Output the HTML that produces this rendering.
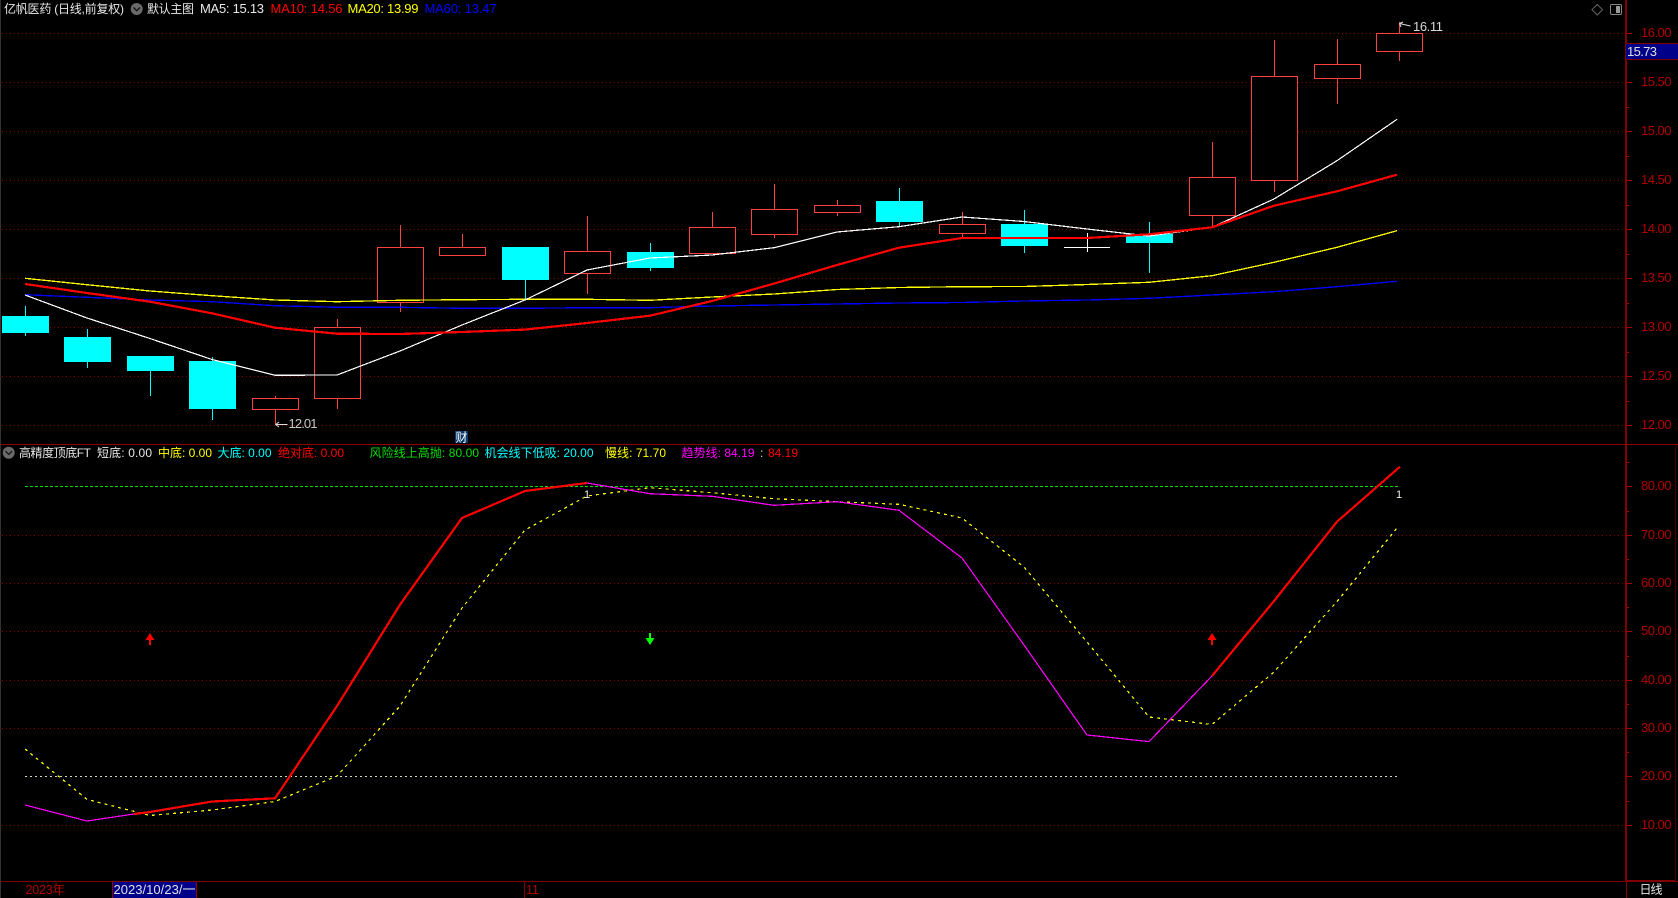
<!DOCTYPE html>
<html><head><meta charset="utf-8"><title>亿帆医药</title>
<style>
html,body{margin:0;padding:0;background:#000;width:1678px;height:898px;overflow:hidden}
svg{display:block;position:absolute;left:0;top:0}
text{font-family:"Liberation Sans","Noto Sans CJK SC",sans-serif;font-size:12.5px;white-space:pre}
.ax{fill:#b00000;font-size:13px}
.g{stroke:#800000;stroke-width:1;stroke-dasharray:1 3}
.r{fill:#000;stroke:#ff4040;stroke-width:1}
.w{stroke:#ff4040;stroke-width:1}
.c{fill:#0ff}
.cw{stroke:#0ff;stroke-width:1}
</style></head><body>
<svg width="1678" height="898" viewBox="0 0 1678 898" xmlns="http://www.w3.org/2000/svg">
<rect width="1678" height="898" fill="#000"/>
<rect x="0" y="0" width="1" height="898" fill="#333"/>
<g shape-rendering="crispEdges">
<!-- grid -->
<g fill="none">
<path class="g" d="M2 33.5H1625M2 82.5H1625M2 131.5H1625M2 180.5H1625M2 229.5H1625M2 278.5H1625M2 327.5H1625M2 376.5H1625M2 425.5H1625"/>
<path class="g" d="M2 535.5H1625M2 583.5H1625M2 631.5H1625M2 680.5H1625M2 728.5H1625M2 825.5H1625"/>
</g>
<!-- frame -->
<rect x="1625" y="0" width="2" height="881" fill="#800000"/>
<rect x="1626" y="881" width="1" height="17" fill="#800000"/>
<rect x="1" y="444" width="1677" height="1" fill="#900000"/>
<rect x="1" y="881" width="1677" height="1" fill="#800000"/>
<rect x="1626" y="880" width="50" height="2" fill="#800000"/>
<rect x="1675" y="445" width="1" height="436" fill="#400000"/>
<path stroke="#a00000" stroke-width="1" d="M1626 33.5H1632M1626 82.5H1632M1626 131.5H1632M1626 180.5H1632M1626 229.5H1632M1626 278.5H1632M1626 327.5H1632M1626 376.5H1632M1626 425.5H1632M1626 486.5H1632M1626 535.5H1632M1626 583.5H1632M1626 631.5H1632M1626 680.5H1632M1626 728.5H1632M1626 776.5H1632M1626 825.5H1632M1626 58.5H1629M1626 107.5H1629M1626 156.5H1629M1626 205.5H1629M1626 254.5H1629M1626 303.5H1629M1626 352.5H1629M1626 401.5H1629M1626 462.5H1629M1626 511.5H1629M1626 559.5H1629M1626 607.5H1629M1626 656.5H1629M1626 704.5H1629M1626 752.5H1629M1626 801.5H1629"/>

<!-- candles -->
<path class="cw" d="M25.5 306V336M87.5 329V368M150.5 371V396M212.5 357V420M525.5 280V300M650.5 243V271M899.5 188V226M1024.5 210V253M1149.5 222V273" fill="none"/>
<rect class="c" x="2" y="316" width="47" height="17"/>
<rect class="c" x="64" y="337" width="47" height="25"/>
<rect class="c" x="127" y="356" width="47" height="15"/>
<rect class="c" x="189" y="361" width="47" height="48"/>
<rect class="c" x="502" y="247" width="47" height="33"/>
<rect class="c" x="627" y="252" width="47" height="16"/>
<rect class="c" x="876" y="201" width="47" height="21"/>
<rect class="c" x="1001" y="224" width="47" height="22"/>
<rect class="c" x="1126" y="234" width="47" height="9"/>

<path class="w" fill="none" d="M275.5 396V425M337.5 319V409M400.5 225V312M462.5 234V248M587.5 216V294M712.5 212V228M774.5 184V238M837.5 200V216M962.5 212V238M1212.5 142V227M1274.5 40V192M1337.5 39V104M1399.5 22V61"/>
<rect class="r" x="252.5" y="398.5" width="46" height="11"/>
<rect class="r" x="314.5" y="327.5" width="46" height="71"/>
<rect class="r" x="377.5" y="247.5" width="46" height="55"/>
<rect class="r" x="439.5" y="247.5" width="46" height="8"/>
<rect class="r" x="564.5" y="251.5" width="46" height="22"/>
<rect class="r" x="689.5" y="227.5" width="46" height="26"/>
<rect class="r" x="751.5" y="209.5" width="46" height="25"/>
<rect class="r" x="814.5" y="205.5" width="46" height="7"/>
<rect class="r" x="939.5" y="224.5" width="46" height="9"/>
<rect class="r" x="1189.5" y="177.5" width="46" height="38"/>
<rect class="r" x="1251.5" y="76.5" width="46" height="104"/>
<rect class="r" x="1314.5" y="64.5" width="46" height="14"/>
<rect class="r" x="1376.5" y="33.5" width="46" height="18"/>
<path stroke="#fff" stroke-width="1" fill="none" d="M1064 247.5H1110M1087.5 233V252"/>

<!-- MA lines -->
<g fill="none" stroke-linejoin="round">
<polyline stroke="#0000ff" stroke-width="1.3" points="25,294.7 87,297.3 150,300 212,301.7 275,305.7 337,307.3 400,307.3 462,308.3 525,308.3 587,307.7 650,307.7 712,306 774,305 837,304 899,303 962,302.5 1024,301 1087,300 1149,298.3 1212,295 1274,291.7 1337,286.7 1397,281.3"/>
<polyline stroke="#ffff00" stroke-width="1.3" points="25,278.3 87,284.7 150,291 212,295.7 275,300 337,301.7 400,300.3 462,299.7 525,299.3 587,299.3 650,300.3 712,297 774,294 837,289.5 899,287.5 962,286.7 1024,286.5 1087,284.5 1149,282.3 1212,275.7 1274,262.3 1337,247.3 1397,230.7"/>
<polyline stroke="#ffffff" stroke-width="1.2" points="25,295 87,318 150,338.5 212,359.5 275,375.3 337,375 400,351 462,325 525,300 587,270 650,258 712,255 774,247.7 837,232 899,226.7 962,217 1024,221.5 1087,229 1149,236 1212,227.3 1274,199 1337,160.7 1397,119.3"/>
<polyline stroke="#ff0000" stroke-width="2.2" points="25,284 87,293 150,301.7 212,313.3 275,327.7 337,333.7 400,334 462,332 525,329.6 587,323 650,315.7 712,301 774,283.6 837,265 899,247.7 962,238 1024,238 1087,238 1149,234.3 1212,227.3 1274,205.7 1337,191.3 1397,174.7"/>
</g>

<!-- lower horizontal levels -->
<path fill="none" stroke="#00e000" stroke-width="1" stroke-dasharray="3 2" d="M25 486.5H1399"/>
<path fill="none" stroke="#d8d8b0" stroke-width="1" stroke-dasharray="2 3" d="M25 776.5H1399"/>

<!-- slow dashed -->
<polyline fill="none" stroke="#ffff00" stroke-width="1.2" stroke-dasharray="3 4" points="25,749 87,799.4 150,815.5 212,810 275,801.5 337,776 400,706 462,608 525,530 587,496 650,487.7 712,492.7 774,498.7 837,501.7 899,504.3 962,518 1024,567 1087,642 1149,717 1212,724.5 1274,672 1337,601.5 1397,528"/>
<!-- trend -->
<polyline fill="none" stroke="#ff00ff" stroke-width="1.2" points="25,805 87,821 134,814"/>
<polyline fill="none" stroke="#ff0000" stroke-width="2.2" points="134,814 150,812 212,801.5 275,798.3 337,706 400,604.7 462,518 525,491 587,483"/>
<polyline fill="none" stroke="#ff00ff" stroke-width="1.2" points="587,483 650,493.7 712,496.3 774,505.3 837,501.7 899,510.3 962,558 1024,645 1087,735 1149,741.6 1212,676"/>
<polyline fill="none" stroke="#ff0000" stroke-width="2.2" points="1212,676 1274,601 1337,521.7 1400,466.7"/>
</g>

<!-- arrows -->
<path fill="#ff0000" d="M150 633L154.5 640H151V645H149V640H145.5Z"/>
<path fill="#ff0000" d="M1212 633L1216.5 640H1213V645H1211V640H1207.5Z"/>
<path fill="#00ff00" d="M650 645L654.5 638H651V633H649V638H645.5Z"/>

<!-- annotations -->
<path fill="none" stroke="#ddd" stroke-width="1" d="M1399.5 23.5L1410.5 26M1399.5 23.5L1403 22M1399.5 23.5L1401 27"/>
<path fill="none" stroke="#ddd" stroke-width="1" d="M275.5 424.5H287.5M275.5 424.5L279 422M275.5 424.5L279 427"/>
<text x="1413" y="31" fill="#d8d8d8" style="font-size:13px" textLength="30">16.11</text>
<text x="288.5" y="428" fill="#c8c8c8" style="font-size:13px" textLength="29">12.01</text>
<rect x="455" y="431" width="13" height="12" fill="#0a3a6c"/>
<text x="455.5" y="441.5" fill="#fff" style="font-size:12px">财</text>
<text x="584" y="498" fill="#f0f0e0" style="font-size:11px">1</text>
<text x="1396" y="498" fill="#f0f0e0" style="font-size:11px">1</text>

<!-- header -->
<text x="4" y="13" fill="#e8e8e8" style="font-size:12px" textLength="120">亿帆医药 (日线,前复权)</text>
<circle cx="136.7" cy="9" r="6" fill="#6a6a6a"/>
<path d="M133.5 7.5L136.7 10.7L140 7.5" fill="none" stroke="#111" stroke-width="1.3"/>
<text x="147" y="13" fill="#e8e8e8" style="font-size:12px" textLength="47">默认主图</text>
<text x="200" y="13" fill="#e8e8e8" style="font-size:13px" textLength="64">MA5: 15.13</text>
<text x="270.5" y="13" fill="#ff0000" style="font-size:13px" textLength="72">MA10: 14.56</text>
<text x="347.5" y="13" fill="#ffff00" style="font-size:13px" textLength="71">MA20: 13.99</text>
<text x="424.5" y="13" fill="#0000ff" style="font-size:13px" textLength="72">MA60: 13.47</text>
<path d="M1597.3 4.5L1602.5 9.7L1597.3 15L1592 9.7Z" fill="none" stroke="#666" stroke-width="1"/>
<rect x="1610.5" y="4.5" width="11" height="10" rx="1.5" fill="none" stroke="#888" stroke-width="1"/>
<rect x="1616" y="6" width="4" height="7" fill="#999"/>

<!-- lower header -->
<circle cx="8.7" cy="452.7" r="6" fill="#6a6a6a"/>
<path d="M5.5 451.2L8.7 454.4L12 451.2" fill="none" stroke="#111" stroke-width="1.3"/>
<text x="19" y="457" fill="#e8e8e8" style="font-size:12px" textLength="72">高精度顶底FT</text>
<text x="97" y="457" fill="#e8e8e8" style="font-size:12px" textLength="55">短底: 0.00</text>
<text x="158" y="457" fill="#ffff00" style="font-size:12px" textLength="54">中底: 0.00</text>
<text x="217.5" y="457" fill="#00ffff" style="font-size:12px" textLength="54">大底: 0.00</text>
<text x="278" y="457" fill="#ff0000" style="font-size:12px" textLength="66">绝对底: 0.00</text>
<text x="369.5" y="457" fill="#00e000" style="font-size:12px" textLength="109.5">风险线上高抛: 80.00</text>
<text x="484.5" y="457" fill="#00ffff" style="font-size:12px" textLength="109">机会线下低吸: 20.00</text>
<text x="605" y="457" fill="#ffff00" style="font-size:12px" textLength="61">慢线: 71.70</text>
<text x="681.5" y="457" fill="#ff00ff" style="font-size:12px" textLength="73">趋势线: 84.19</text>
<text x="760" y="457" fill="#dddddd" style="font-size:12px">:</text>
<text x="768" y="457" fill="#ff0000" style="font-size:12px" textLength="30">84.19</text>

<!-- axis labels -->
<g>
<text class="ax" x="1641" y="37" textLength="30.5">16.00</text>
<text class="ax" x="1641" y="86" textLength="30.5">15.50</text>
<text class="ax" x="1641" y="135" textLength="30.5">15.00</text>
<text class="ax" x="1641" y="184" textLength="30.5">14.50</text>
<text class="ax" x="1641" y="233" textLength="30.5">14.00</text>
<text class="ax" x="1641" y="282" textLength="30.5">13.50</text>
<text class="ax" x="1641" y="331" textLength="30.5">13.00</text>
<text class="ax" x="1641" y="380" textLength="30.5">12.50</text>
<text class="ax" x="1641" y="429" textLength="30.5">12.00</text>
<text class="ax" x="1641" y="490" textLength="30.5">80.00</text>
<text class="ax" x="1641" y="539" textLength="30.5">70.00</text>
<text class="ax" x="1641" y="587" textLength="30.5">60.00</text>
<text class="ax" x="1641" y="635" textLength="30.5">50.00</text>
<text class="ax" x="1641" y="684" textLength="30.5">40.00</text>
<text class="ax" x="1641" y="732" textLength="30.5">30.00</text>
<text class="ax" x="1641" y="780" textLength="30.5">20.00</text>
<text class="ax" x="1641" y="829" textLength="30.5">10.00</text>
</g>

<!-- price box -->
<g shape-rendering="crispEdges">
<rect x="1626" y="43" width="52" height="17" fill="#000088"/>
<rect x="1626" y="43" width="52" height="1" fill="#800000"/>
<rect x="1626" y="59" width="52" height="1" fill="#800000"/>
</g>
<text x="1627" y="56" fill="#e0e0e0" style="font-size:13px" textLength="30">15.73</text>

<!-- bottom axis -->
<text x="25.5" y="894" fill="#b00000" style="font-size:12.5px" textLength="39.5">2023年</text>
<g shape-rendering="crispEdges">
<rect x="112" y="882" width="85" height="16" fill="#000088"/>
<rect x="112" y="882" width="1" height="16" fill="#900000"/>
<rect x="196" y="882" width="1" height="16" fill="#900000"/>
<rect x="524" y="882" width="1" height="16" fill="#800000"/>
</g>
<text x="113.5" y="894" fill="#e0e0e0" style="font-size:13px" textLength="82">2023/10/23/一</text>
<text x="526" y="894" fill="#b00000" style="font-size:12.5px" textLength="13">11</text>
<text x="1639.5" y="893.5" fill="#e8e8e8" style="font-size:12px" textLength="23">日线</text>
</svg>
</body></html>
